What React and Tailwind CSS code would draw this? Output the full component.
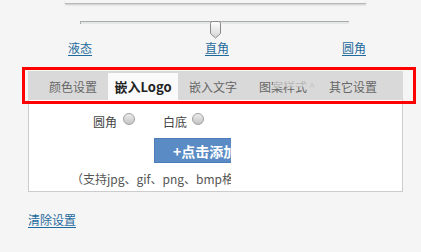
import React from 'react';

const tabs = ['颜色设置', '嵌入Logo', '嵌入文字', '图案样式', '其它设置'];

const Radio = () => (
  <span className="inline-block w-[12px] h-[12px] rounded-full border border-[#a0a0a0] bg-[linear-gradient(to_bottom,#ececec,#c4c4c4)]" />
);

const Thumb = () => (
  <svg width="11" height="18" viewBox="0 0 11 18" className="absolute left-[130px] top-0">
    <defs>
      <linearGradient id="th" x1="0" y1="0" x2="0" y2="1">
        <stop offset="0" stopColor="#ffffff" />
        <stop offset="1" stopColor="#d4d4d4" />
      </linearGradient>
    </defs>
    <path d="M2.5 0.5 H8.5 A2 2 0 0 1 10.5 2.5 V12.5 L5.5 17 L0.5 12.5 V2.5 A2 2 0 0 1 2.5 0.5 Z" fill="url(#th)" stroke="#8a8a8a" />
  </svg>
);

export default function App() {
  return (
    <div className="relative w-[421px] h-[252px] overflow-hidden bg-[#f5f5f5] font-['Noto_Sans_CJK_SC','Liberation_Sans',sans-serif] text-[12px]">
      {/* top bar edge */}
      <div className="ml-[65px] w-[301px] h-[4px] border-b border-[#b8b8b8] shadow-[0_1px_2px_rgba(0,0,0,0.18)]" />

      {/* slider */}
      <div className="relative ml-[80px] mt-[17px] w-[269px] h-[17px]">
        <div className="mt-[6px] h-[3px] border-t border-l border-[#ababab] bg-[#e5e8e8]" />
        <Thumb />
      </div>
      <div className="ml-[68px] mt-[4px] w-[298px] flex justify-between leading-[12px] text-[#1f6a9c] underline underline-offset-[2px]">
        <span>液态</span>
        <span>直角</span>
        <span>圆角</span>
      </div>

      {/* tabs */}
      <div className="ml-[28px] mt-[17px] w-[375px]">
        <div className="h-[29px] bg-[#d9d9d9] flex items-end pl-[10px]">
          {tabs.map((t, i) => (
            <div
              key={t}
              className={`w-[70px] h-[27px] flex items-center justify-center leading-[12px] ${
                i === 1 ? 'bg-[#fafafa] text-[#222] font-bold text-[13px]' : 'text-[#666] text-[12px]'
              }`}
            >
              {i === 3 ? (
                <span className="relative">
                  图案样式
                  <span className="absolute left-[14px] top-[-2px] w-[34px] h-[8px] bg-[#d9d9d9]/70" />
                  <span className="absolute left-[50px] top-[-1px] text-[#c4c4c4] text-[11px]">^</span>
                </span>
              ) : (
                t
              )}
            </div>
          ))}
        </div>

        {/* panel, content clipped at its left part */}
        <div className="h-[92px] bg-white border-l border-r border-b border-[#cccccc]">
          <div className="w-[202px] h-full overflow-hidden">
            <div className="w-[373px] text-[#444]">
              <div className="mt-[13px] pl-[64px] flex items-start h-[15px] leading-[12px]">
                <span className="mt-[3px]">圆角</span>
                <span className="ml-[6px]"><Radio /></span>
                <span className="ml-[28px] mt-[3px]">白底</span>
                <span className="ml-[5px]"><Radio /></span>
                <span className="ml-[27px] mt-[3px] text-[#e08a3a]">宽</span>
              </div>
              <div className="mt-[10px] ml-[125px] w-[110px] h-[25px] bg-[#5b8bc4] border border-[#4d7db8] text-white font-bold text-[14px] leading-[14px] flex items-center pl-[18px] whitespace-nowrap">
                +点击添加图片
              </div>
              <div className="mt-[10px] ml-[42px] leading-[12px] text-[#555] whitespace-nowrap">
                （支持jpg、gif、png、bmp格式）
              </div>
            </div>
          </div>
        </div>
      </div>

      <div className="ml-[28px] mt-[22px] leading-[12px] text-[#1f6a9c] underline underline-offset-[2px]">
        清除设置
      </div>

      {/* highlight box */}
      <div className="absolute left-[22px] top-[67px] w-[394px] h-[37px] border-[3px] border-[#ff0000]" />
    </div>
  );
}
